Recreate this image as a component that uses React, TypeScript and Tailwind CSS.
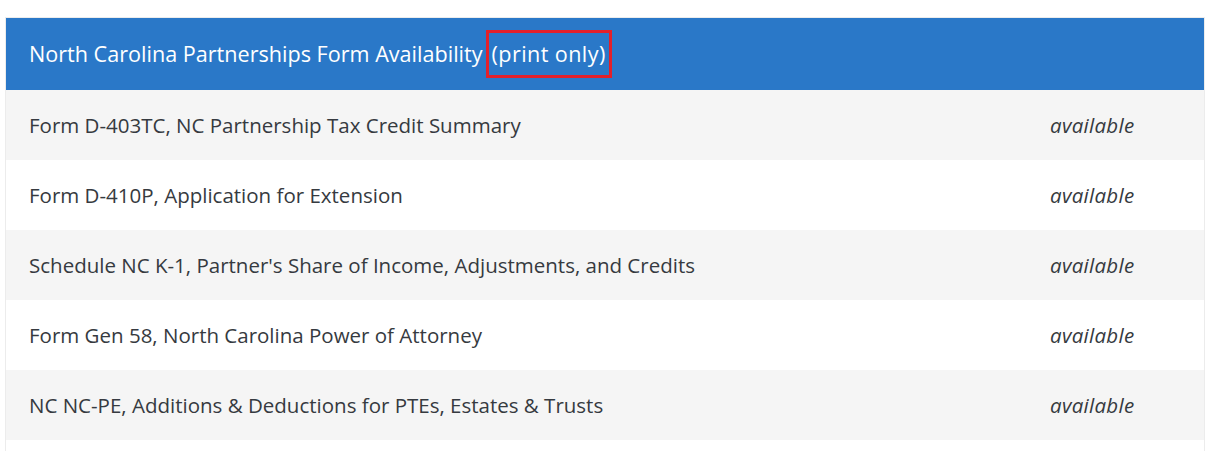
import React from "react";

const forms = [
  "Form D-403TC, NC Partnership Tax Credit Summary",
  "Form D-410P, Application for Extension",
  "Schedule NC K-1, Partner's Share of Income, Adjustments, and Credits",
  "Form Gen 58, North Carolina Power of Attorney",
  "NC NC-PE, Additions & Deductions for PTEs, Estates & Trusts",
];

export default function App() {
  return (
    <div className="min-h-screen bg-white pt-[17px] pl-[5px] font-['Open_Sans',sans-serif]">
      <div className="w-[1200px] border border-[#ececec]">
        {/* Header */}
        <div className="h-[72px] bg-[#2a78c8] flex items-center pl-[23px] text-white text-[21.6px]">
          <span>North Carolina Partnerships Form Availability</span>
          <span className="ml-[3px] border-[3px] border-[#e3202a] px-[3px] py-[8px] leading-[1.2] tracking-[0.4px]">
            (print only)
          </span>
        </div>
        {forms.map((name, i) => (
          <div
            key={name}
            className={`h-[70px] flex items-center text-[#363a40] text-[20.5px] ${
              i % 2 === 0 ? "bg-[#f5f5f5]" : "bg-white"
            }`}
          >
            <div className="flex-1 pl-[23px]">{name}</div>
            <div className="w-[154px] italic tracking-[0.3px]">available</div>
          </div>
        ))}
        {/* next row starts just below the fold */}
        <div className="h-[70px] bg-white" />
      </div>
    </div>
  );
}
